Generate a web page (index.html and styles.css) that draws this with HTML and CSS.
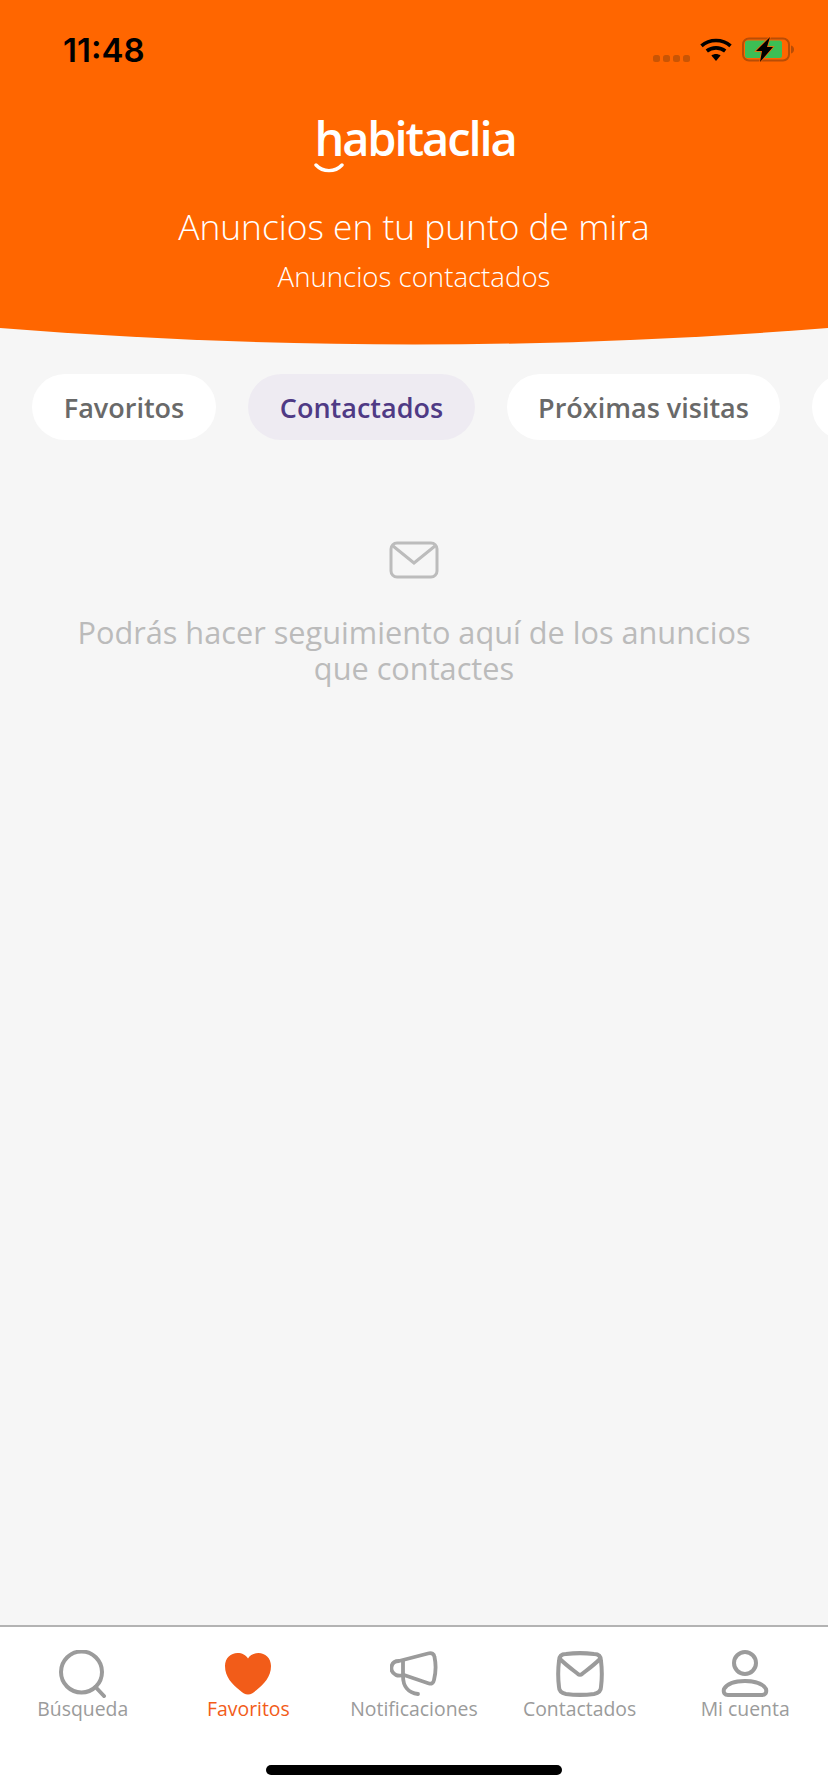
FILE: index.html
```html
<!DOCTYPE html>
<html lang="es">
<head>
<meta charset="utf-8">
<title>habitaclia</title>
<link rel="stylesheet" href="styles.css">
</head>
<body>
<div class="page">
  <header class="hero">
    <div class="status">
      <span class="time">11:48</span>
      <div class="status-icons">
        <svg class="signal" width="37" height="9" viewBox="0 0 37 9"><g fill="#c95505"><rect x="0" y="1" width="7" height="7" rx="2.500"/><rect x="10" y="1" width="7" height="7" rx="2.500"/><rect x="20" y="1" width="7" height="7" rx="2.500"/><rect x="30" y="1" width="7" height="7" rx="2.500"/></g></svg>
        <svg width="32" height="24" viewBox="0 0 32 24"><g fill="none" stroke="#000" stroke-width="3.600"><path d="M1.500 7.800C9.500 .8 22.500 .8 30.500 7.800"/><path d="M6.800 13C12 8.800 20 8.800 25.200 13"/></g><path d="M11.400 17.500c2.700-2 6.500-2 9.200 0L16 23z" fill="#000"/></svg>
        <svg width="54" height="27" viewBox="0 0 54 27"><rect x="1" y="2.500" width="46" height="22" rx="6" fill="none" stroke="#b84d06" stroke-width="2"/><rect x="3" y="4.500" width="37" height="17.500" rx="2.500" fill="#3cbf55"/><path d="M49 9.500c2 .5 3 2 3 4s-1 3.500-3 4z" fill="#b84d06"/><path d="M28 1 14 15h6l-2 11 13-15h-6z" fill="#000" stroke="#ff6600" stroke-width="1.500" paint-order="stroke"/></svg>
      </div>
    </div>
    <div class="logo">
      <span class="logo-word">habitaclia</span>
      <svg class="logo-smile" width="30" height="11" viewBox="0 0 30 11"><path d="M2 2c7 7.500 19 7.500 26 0" fill="none" stroke="#fff" stroke-width="3.400" stroke-linecap="round"/></svg>
    </div>
    <h1 class="title">Anuncios en tu punto de mira</h1>
    <p class="subtitle">Anuncios contactados</p>
  </header>
  <svg class="curve" width="828" height="17" viewBox="0 0 828 17" preserveAspectRatio="none"><path d="M0 0H828C690 11 552 16.500 414 16.500S138 11 0 0Z" fill="#ff6600"/></svg>
  <nav class="chips">
    <a class="chip chip-fav">Favoritos</a>
    <a class="chip chip-con is-active">Contactados</a>
    <a class="chip chip-vis">Próximas visitas</a>
    <a class="chip chip-more"></a>
  </nav>
  <main class="empty">
    <svg width="50" height="38" viewBox="0 0 50 38"><rect x="2" y="2" width="46" height="34" rx="6" fill="none" stroke="#bcbcbc" stroke-width="3"/><path d="M4 5 25 22 46 5" fill="none" stroke="#bcbcbc" stroke-width="3"/></svg>
    <p class="empty-text">Podrás hacer seguimiento aquí de los anuncios<br>que contactes</p>
  </main>
  <footer class="tabbar">
    <div class="tabs">
      <div class="tab">
        <svg width="48" height="48" viewBox="0 0 48 48"><circle cx="22.500" cy="22" r="20.500" fill="none" stroke="#9b9b9b" stroke-width="4"/><path d="M36.500 37 45 46" fill="none" stroke="#9b9b9b" stroke-width="4" stroke-linecap="round"/></svg>
        <span>Búsqueda</span>
      </div>
      <div class="tab is-active">
        <svg width="48" height="48" viewBox="0 0 48 48"><path d="M24 44.500C21 44.500 19 43 16 40.500 8 34 1 27 1 16 1 8 7 3 13.500 3 18 3 22 5 24 8.500 26 5 30 3 34.500 3 41 3 47 8 47 16 47 27 40 34 32 40.500 29 43 27 44.500 24 44.500Z" fill="#f25c19"/></svg>
        <span>Favoritos</span>
      </div>
      <div class="tab">
        <svg width="48" height="48" viewBox="0 0 48 48"><g fill="none" stroke="#9b9b9b" stroke-width="3.800" stroke-linejoin="round" stroke-linecap="round"><path d="M38 3.500C42 2.500 44 4 44.500 7 46 14 46 22 44 30 43.500 33 41.500 34 39 33.500L14 25C10 26 8 26 6 25 2 23 1 20 1.500 17 2 13 5 11 9 11Z"/><path d="M13 11V26C13 36 18 43 28 44"/></g></svg>
        <span>Notificaciones</span>
      </div>
      <div class="tab">
        <svg width="48" height="48" viewBox="0 0 48 48"><g fill="none" stroke="#9b9b9b" stroke-width="4" stroke-linejoin="round" stroke-linecap="round"><path d="M10 4C18 3 30 3 38 4C43 4 45 7 45 11C46 19 46 29 45 37C45 41 43 43 38 44C30 45 18 45 10 44C5 43 3 41 3 37C2 29 2 19 3 11C3 7 5 4 10 4Z"/><path d="M4 9C10 15 17 20 22 24C23 25 25 25 26 24C31 20 38 15 44 9"/></g></svg>
        <span>Contactados</span>
      </div>
      <div class="tab">
        <svg width="48" height="48" viewBox="0 0 48 48"><g fill="none" stroke="#9b9b9b" stroke-width="4"><circle cx="24" cy="13" r="11"/><path d="M24 31C34 31 42 34 45 39C46 43 44 45 41 45H7C4 45 2 43 3 39C6 34 14 31 24 31Z"/></g></svg>
        <span>Mi cuenta</span>
      </div>
    </div>
    <div class="home-bar"></div>
  </footer>
</div>
</body>
</html>
```
FILE: styles.css
```css
* { box-sizing: border-box; }
html, body { margin: 0; padding: 0; }
body { font-family: "Open Sans", "Noto Sans", sans-serif; background: #f6f6f6; }
.page { width: 828px; height: 1792px; display: flex; flex-direction: column; overflow: hidden; }

.hero { height: 328px; background: #ff6600; color: #fff; display: flex; flex-direction: column; align-items: center; }
.status { width: 100%; height: 100px; padding: 30px 32px 0 63px; display: flex; justify-content: space-between; align-items: flex-start; }
.time { font-family: Inter, sans-serif; font-size: 33px; font-weight: 600; line-height: 40px; color: #000; }
.status-icons { display: flex; align-items: center; gap: 10px; padding-top: 6px; }
.signal { margin-top: 17px; }

.logo { display: flex; flex-direction: column; align-items: flex-start; height: 72px; margin-top: 12px; margin-left: 2px; }
.logo-word { font-size: 47px; font-weight: 600; line-height: 52px; letter-spacing: -2.100px; }
.logo-smile { margin-top: -1px; margin-left: 0; }

.title { margin: 19px 0 0; font-size: 35.300px; font-weight: 300; line-height: 46px; }
.subtitle { margin: 9px 0 0; font-size: 27.600px; font-weight: 300; line-height: 36px; }

.curve { display: block; flex: none; }

.chips { display: flex; gap: 32px; padding: 29px 0 0 32px; flex: none; }
.chip { flex: none; height: 66px; border-radius: 33px; background: #fff; color: #696969; font-size: 27px; font-weight: 600; line-height: 68px; text-align: center; }
.chip-fav { width: 184px; }
.chip-con { width: 227px; }
.chip-vis { width: 273px; }
.chip-more { width: 200px; }
.chip.is-active { background: #eeebf2; color: #4f3a85; }

.empty { flex: 1; display: flex; flex-direction: column; align-items: center; padding-top: 101px; }
.empty-text { margin: 35px 0 0; font-size: 30.700px; line-height: 36px; text-align: center; color: #bbb; }

.tabbar { flex: none; height: 167px; background: #fff; border-top: 2px solid #b3b3b3; display: flex; flex-direction: column; }
.tabs { display: flex; padding: 23px 0 0; }
.tab { width: 165.600px; display: flex; flex-direction: column; align-items: center; color: #9b9b9b; font-size: 19.400px; line-height: 22px; }
.tab svg { display: block; }
.tab span { white-space: nowrap; }
.tab.is-active { color: #f25c19; }
.home-bar { width: 296px; height: 10px; border-radius: 5px; background: #000; margin: 45px auto 0; }
```
